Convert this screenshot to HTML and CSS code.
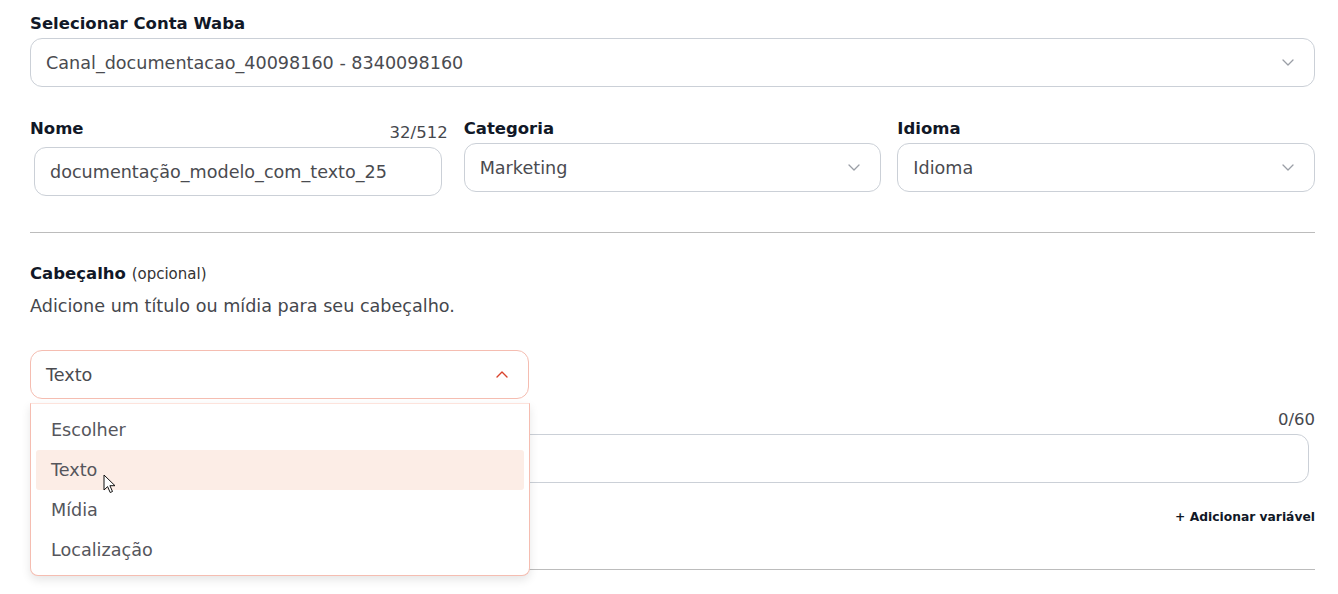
FILE: index.html
```html
<!DOCTYPE html>
<html lang="pt-BR">
<head>
  <meta charset="UTF-8">
  <meta name="viewport" content="width=device-width, initial-scale=1.0">
  <title>Novo modelo</title>
  <link rel="stylesheet" href="styles.css">
</head>
<body>
  <div class="template-form">
    <div class="field">
      <div class="field-label">Selecionar Conta Waba</div>
      <div class="select">
        <span class="select-value">Canal_documentacao_40098160 - 8340098160</span>
        <svg class="chevron" width="12" height="7" viewBox="0 0 12 7"><path d="M1 1l5 5 5-5" fill="none" stroke="#9a9ea6" stroke-width="1.3" stroke-linecap="round" stroke-linejoin="round"/></svg>
      </div>
    </div>

    <div class="form-row">
      <div class="field">
        <div class="label-row">
          <span class="field-label">Nome</span>
          <span class="counter">32/512</span>
        </div>
        <div class="input-box">documentação_modelo_com_texto_25</div>
      </div>
      <div class="field">
        <div class="field-label">Categoria</div>
        <div class="select">
          <span class="select-value">Marketing</span>
          <svg class="chevron" width="12" height="7" viewBox="0 0 12 7"><path d="M1 1l5 5 5-5" fill="none" stroke="#9a9ea6" stroke-width="1.3" stroke-linecap="round" stroke-linejoin="round"/></svg>
        </div>
      </div>
      <div class="field">
        <div class="field-label">Idioma</div>
        <div class="select">
          <span class="select-value">Idioma</span>
          <svg class="chevron" width="12" height="7" viewBox="0 0 12 7"><path d="M1 1l5 5 5-5" fill="none" stroke="#9a9ea6" stroke-width="1.3" stroke-linecap="round" stroke-linejoin="round"/></svg>
        </div>
      </div>
    </div>

    <hr class="divider">

    <div class="section">
      <div class="section-title">Cabeçalho <span class="optional">(opcional)</span></div>
      <p class="section-desc">Adicione um título ou mídia para seu cabeçalho.</p>

      <div class="dropdown">
        <div class="select select-open">
          <span class="select-value">Texto</span>
          <svg class="chevron" width="12" height="7" viewBox="0 0 12 7"><path d="M1 6l5-5 5 5" fill="none" stroke="#d9432c" stroke-width="1.4" stroke-linecap="round" stroke-linejoin="round"/></svg>
        </div>
        <ul class="dropdown-menu">
          <li class="dropdown-item">Escolher</li>
          <li class="dropdown-item active">Texto</li>
          <li class="dropdown-item">Mídia</li>
          <li class="dropdown-item">Localização</li>
        </ul>
        <svg class="cursor" width="14" height="20" viewBox="0 0 14 20"><path d="M1 1v15l3.6-3.4 2.6 5.9 2.3-1-2.6-5.8H12z" fill="#fff" stroke="#111" stroke-width="1" stroke-linejoin="round"/></svg>
      </div>

      <div class="header-text">
        <div class="label-row label-row-end">
          <span class="counter">0/60</span>
        </div>
        <div class="input-box"></div>
        <div class="add-var">+ Adicionar variável</div>
      </div>
    </div>

    <hr class="divider divider-bottom">
  </div>
</body>
</html>
```

FILE: styles.css
```css
body {
  margin: 0;
  font-family: "DejaVu Sans", sans-serif;
  color: #1b1f2a;
  background: #fff;
}

.template-form {
  padding: 13px 23px 40px 30px;
}

.field-label {
  font-size: 16.5px;
  font-weight: bold;
  line-height: 22px;
  color: #111827;
  margin-bottom: 3px;
}

.select {
  height: 49px;
  box-sizing: border-box;
  border: 1px solid #cbd0d7;
  border-radius: 12px;
  display: flex;
  align-items: center;
  justify-content: space-between;
  padding: 0 20px 0 15px;
  background: #fff;
}

.select-value {
  font-size: 17.6px;
  color: #4a4b50;
}

.chevron {
  display: block;
}

.form-row {
  display: grid;
  grid-template-columns: 1fr 1fr 1fr;
  gap: 16px;
  margin-top: 31px;
}

.label-row {
  display: flex;
  justify-content: space-between;
  align-items: flex-start;
  margin-bottom: 3px;
}

.label-row .field-label {
  margin-bottom: 0;
}

.label-row-end {
  justify-content: flex-end;
}

.counter {
  font-size: 16.5px;
  line-height: 22px;
  padding-top: 4px;
  color: #45474d;
}

.input-box {
  height: 49px;
  box-sizing: border-box;
  margin: 0 6px 0 4px;
  border: 1px solid #cbd0d7;
  border-radius: 12px;
  padding: 0 15px;
  display: flex;
  align-items: center;
  font-size: 17.6px;
  color: #4a4b50;
}

.divider {
  border: 0;
  border-top: 1px solid #bcbcbc;
  margin: 36px 0 0;
}

.section {
  padding-top: 30px;
}

.section-title {
  font-size: 16.5px;
  font-weight: bold;
  line-height: 22px;
  color: #111827;
}

.optional {
  font-size: 15px;
  font-weight: normal;
  color: #333;
}

.section-desc {
  margin: 10px 0 0;
  font-size: 17.6px;
  line-height: 22px;
  color: #45474d;
}

.dropdown {
  position: relative;
  width: 499px;
  margin-top: 33px;
}

.select-open {
  border-color: #f5bdb1;
}

.dropdown-menu {
  position: absolute;
  top: 53px;
  left: 0;
  width: 500px;
  box-sizing: border-box;
  margin: 0;
  padding: 6px 5px 5px;
  list-style: none;
  background: #fff;
  border: 1px solid #f5bdb1;
  border-top-color: #fde3dc;
  border-radius: 0 0 8px 8px;
  box-shadow: 0 4px 10px rgba(0, 0, 0, 0.1);
  z-index: 2;
}

.dropdown-item {
  height: 40px;
  line-height: 40px;
  padding-left: 15px;
  font-size: 17.6px;
  color: #55565c;
  border-radius: 3px;
}

.dropdown-item.active {
  background: #fcede6;
}

.cursor {
  position: absolute;
  left: 73px;
  top: 124px;
  z-index: 3;
}

.header-text {
  margin-top: 6px;
}

.add-var {
  text-align: right;
  font-size: 12.3px;
  line-height: 16px;
  font-weight: bold;
  color: #111827;
  margin-top: 26px;
}

.divider-bottom {
  margin-top: 44px;
  margin-left: 4px;
}
```
